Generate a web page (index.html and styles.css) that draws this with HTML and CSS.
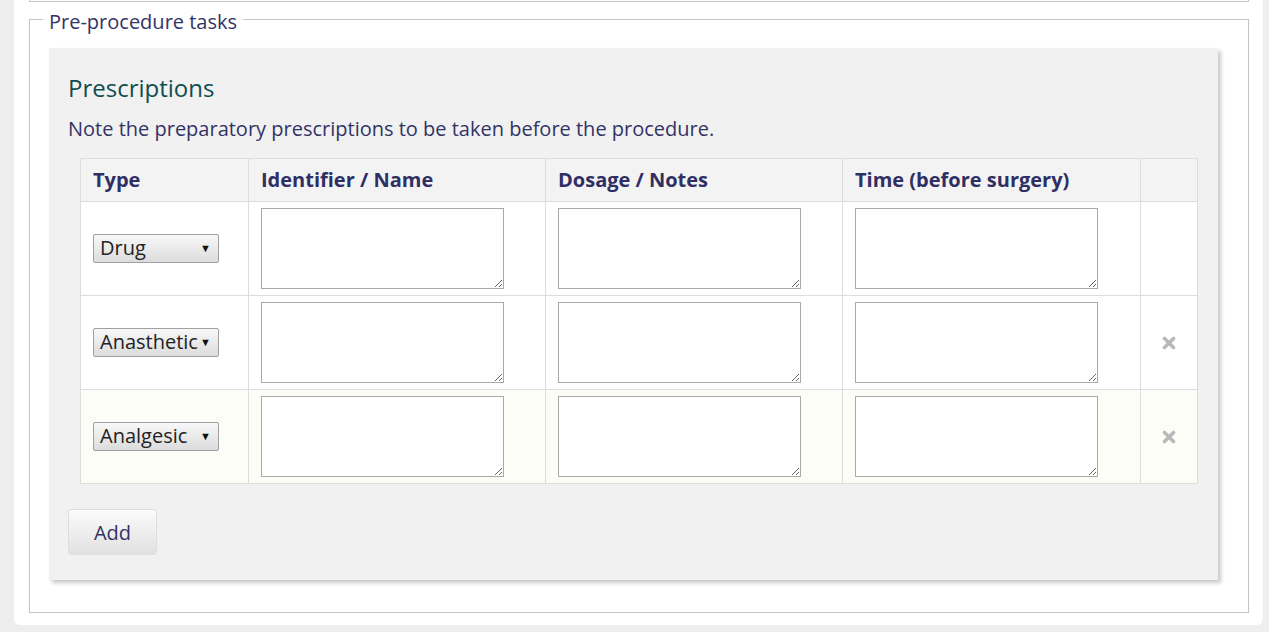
FILE: index.html
```html
<!DOCTYPE html>
<html>
<head>
<meta charset="utf-8">
<link rel="stylesheet" href="styles.css">
</head>
<body>
<div class="page">
  <div class="prev-fieldset"></div>
  <fieldset class="tasks">
    <legend>Pre-procedure tasks</legend>
    <div class="panel">
      <h2 class="panel-title">Prescriptions</h2>
      <p class="panel-desc">Note the preparatory prescriptions to be taken before the procedure.</p>
      <table class="rx">
        <colgroup>
          <col class="c-type"><col class="c-name"><col class="c-dose"><col class="c-time"><col class="c-del">
        </colgroup>
        <thead>
          <tr><th>Type</th><th>Identifier / Name</th><th>Dosage / Notes</th><th>Time (before surgery)</th><th></th></tr>
        </thead>
        <tbody>
          <tr>
            <td><div class="sel"><span>Drug</span><span class="arrow">▼</span></div></td>
            <td><textarea></textarea></td>
            <td><textarea></textarea></td>
            <td><textarea></textarea></td>
            <td></td>
          </tr>
          <tr>
            <td><div class="sel"><span>Anasthetic</span><span class="arrow">▼</span></div></td>
            <td><textarea></textarea></td>
            <td><textarea></textarea></td>
            <td><textarea></textarea></td>
            <td class="del"><svg class="x" width="14" height="14" viewBox="0 0 14 14"><path d="M2.5 2.5 L11.5 11.5 M11.5 2.5 L2.5 11.5" stroke="#b9b9b9" stroke-width="3.6" stroke-linecap="round"/></svg></td>
          </tr>
          <tr class="hl">
            <td><div class="sel"><span>Analgesic</span><span class="arrow">▼</span></div></td>
            <td><textarea></textarea></td>
            <td><textarea></textarea></td>
            <td><textarea></textarea></td>
            <td class="del"><svg class="x" width="14" height="14" viewBox="0 0 14 14"><path d="M2.5 2.5 L11.5 11.5 M11.5 2.5 L2.5 11.5" stroke="#b9b9b9" stroke-width="3.6" stroke-linecap="round"/></svg></td>
          </tr>
        </tbody>
      </table>
      <button class="add">Add</button>
    </div>
  </fieldset>
</div>
</body>
</html>
```

FILE: styles.css
```css
html, body {
  margin: 0;
  padding: 0;
  background: #eeeeee;
  font-family: "Open Sans", "Liberation Sans", sans-serif;
  color: #333366;
}
.page {
  margin: 0 6px 0 14px;
  padding: 0 14px 12px 15px;
  background: #ffffff;
  border-radius: 0 0 6px 6px;
}
.prev-fieldset {
  height: 1px;
  border: 1px solid #c4c4c4;
  border-top: none;
}
.tasks {
  margin: 2px 0 0 0;
  border: 1px solid #c4c4c4;
  padding: 0 30px 32px 13px;
  min-width: 0;
}
.tasks legend {
  font-size: 20px;
  padding: 4px 6px 0 6px;
  line-height: 27px;
  color: #333366;
}
.panel {
  margin-left: 6px;
  margin-top: 13px;
  background: #f1f1f1;
  box-shadow: 3px 3px 4px rgba(0, 0, 0, 0.22);
  padding: 23px 19px 25px 19px;
}
.panel-title {
  margin: 0;
  font-size: 24px;
  font-weight: normal;
  line-height: 33px;
  color: #0f4e4f;
}
.panel-desc {
  margin: 11px 0 16px 0;
  font-size: 20px;
  line-height: 27px;
}
.rx {
  border-collapse: collapse;
  table-layout: fixed;
  width: 1117px;
  margin-left: 12px;
}
.c-type { width: 168px; }
.c-name { width: 297px; }
.c-dose { width: 297px; }
.c-time { width: 298px; }
.c-del { width: 57px; }
.rx th, .rx td {
  border: 1px solid #dddddd;
  padding: 6px 12px;
  vertical-align: middle;
}
.rx th {
  background: #f3f3f3;
  text-align: left;
  font-size: 20px;
  font-weight: bold;
  line-height: 30px;
  color: #2f2f63;
}
.rx td {
  background: #ffffff;
  line-height: 20px;
}
.rx tr.hl td {
  background: #fdfdf8;
}
.rx textarea {
  display: block;
  box-sizing: border-box;
  width: 243px;
  height: 81px;
  border: 1px solid #a9a9a9;
  margin: 0;
  background: #fff;
}
.sel {
  box-sizing: border-box;
  width: 126px;
  height: 29px;
  border: 1px solid #a0a0a0;
  border-radius: 2px;
  background: linear-gradient(#f8f8f8, #dcdcdc);
  display: flex;
  align-items: center;
  justify-content: space-between;
  padding: 0 7px 2px 6px;
  font-size: 20px;
  color: #222;
}
.sel .arrow {
  font-size: 11px;
  color: #111;
}
.del {
  text-align: center;
}
.x {
  display: block;
  margin: 0 auto;
}
.add {
  margin-top: 25px;
  width: 89px;
  height: 46px;
  border: 1px solid #dddddd;
  border-radius: 3px;
  background: linear-gradient(#fbfbfb, #e1e1e1);
  font-family: "Open Sans", "Liberation Sans", sans-serif;
  font-size: 20px;
  color: #333366;
  display: block;
}
```
